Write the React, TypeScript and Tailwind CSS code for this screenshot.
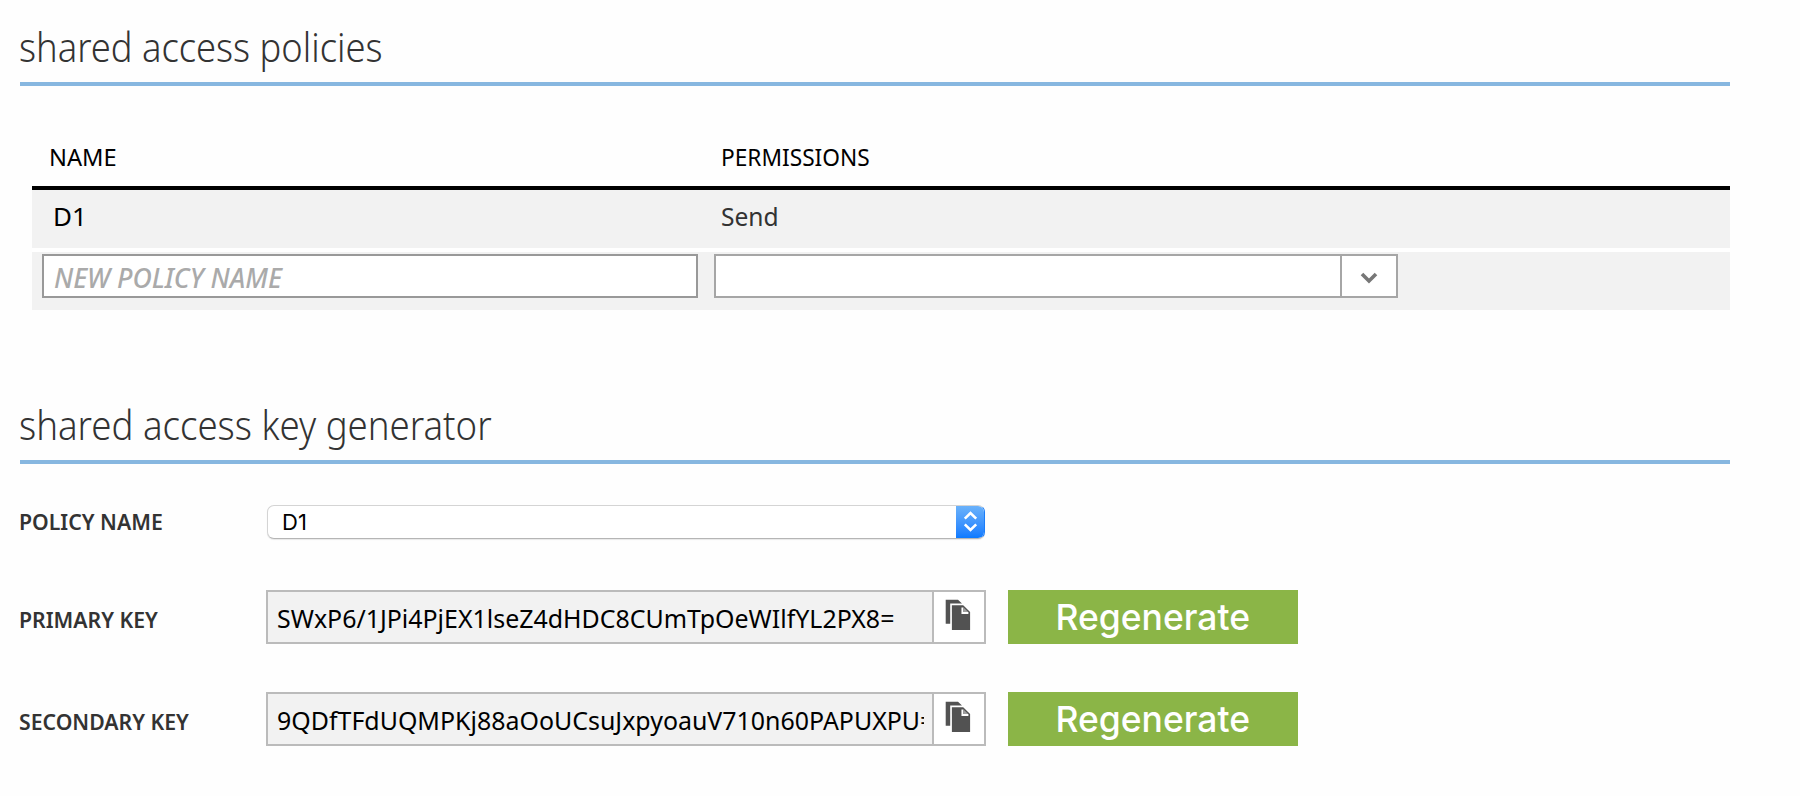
import type { ReactNode } from "react";

function SectionHeading({ children, className = "" }: { children: ReactNode; className?: string }) {
  return (
    <h2 className="ml-5 h-[86px] w-[1710px] border-b-4 border-[#87b7e0] pt-[17px] text-[40px] leading-[60px] font-light whitespace-nowrap text-[#333]">
      <span className={`-ml-px inline-block origin-left ${className}`}>{children}</span>
    </h2>
  );
}

function CopyIcon() {
  return (
    <svg width="26" height="32" viewBox="0 0 26 32" fill="none">
      <path d="M0.7 0.7H13L17 4.6H5.2V24.8H0.7Z" fill="#525252" />
      <path d="M6.9 6.3H18.2L25.1 12.9V31H6.9Z" fill="#525252" />
      <path d="M17.4 8.4V14H23.4" stroke="#fff" strokeWidth="1.9" />
      <path d="M18.3 8.2L23.2 13.1H18.3Z" fill="#a0a0a0" />
    </svg>
  );
}

function Label({ children, className = "" }: { children: ReactNode; className?: string }) {
  return (
    <div
      className={`flex w-[247px] shrink-0 items-center text-[22px] leading-8 font-semibold whitespace-nowrap text-[#333] ${className}`}
    >
      <span className="inline-block origin-left scale-x-[0.965]">{children}</span>
    </div>
  );
}

function KeyRow({ label, value }: { label: string; value: string }) {
  return (
    <div className="flex h-[54px]">
      <Label className="pt-[3px]">{label}</Label>
      <div className="flex w-[720px] border-2 border-[#bbb] bg-white">
        <div className="flex w-[664px] items-center bg-[#f2f2f2] pt-0.5 pr-2 pl-[9px]">
          <div className="w-full overflow-hidden text-[26px] leading-9 whitespace-nowrap text-black">
            <span className="inline-block origin-left scale-x-[0.959]">{value}</span>
          </div>
        </div>
        <button className="flex flex-1 justify-center border-l-2 border-[#bbb] pt-[7px] pr-0.5">
          <CopyIcon />
        </button>
      </div>
      <button className="ml-[22px] w-[290px] bg-[#8bb547] font-['Inter',sans-serif] text-[36px] leading-[54px] font-medium text-white">
        <span className="inline-block scale-x-[0.985]">Regenerate</span>
      </button>
    </div>
  );
}

export default function App() {
  return (
    <main className="h-[796px] w-[1800px] overflow-hidden bg-[#fefefe] font-['Noto_Sans',sans-serif]">
      <SectionHeading className="scale-x-[0.908]">shared access policies</SectionHeading>

      <div className="mt-[42px] ml-8 w-[1698px] bg-white">
        <div className="flex h-[62px] border-b-4 border-black bg-[#fefefe] pl-[17px] text-[24px] leading-[58px] text-black">
          <div className="w-[672px]">
            <span className="inline-block origin-left scale-x-[0.985]">NAME</span>
          </div>
          <div>
            <span className="inline-block origin-left scale-x-[0.945]">PERMISSIONS</span>
          </div>
        </div>
        <div className="flex h-[58px] bg-[#f2f2f2] pl-[21px] leading-[52px]">
          <div className="w-[668px] text-[26px] text-black">D1</div>
          <div className="text-[26px] text-[#333]">
            <span className="inline-block origin-left scale-x-[0.945]">Send</span>
          </div>
        </div>
        <div className="mt-1 flex h-[58px] items-start gap-4 bg-[#f2f2f2] pt-0.5 pl-[10px]">
          <div className="flex h-11 w-[656px] items-center border-2 border-[#999] bg-white pt-[3px] pl-2.5 text-[27px] leading-9 font-medium text-[#aaa] italic">
            <span className="inline-block origin-left scale-x-[0.985] whitespace-nowrap">NEW POLICY NAME</span>
          </div>
          <div className="flex h-11 w-[684px] border-2 border-[#a6a6a6] bg-white">
            <div className="w-[624px]" />
            <button className="flex flex-1 items-center justify-center border-l-2 border-[#a6a6a6] pt-[3px]">
              <svg width="18" height="12" viewBox="0 0 18 12" fill="none">
                <path d="M2 2L9 9L16 2" stroke="#777" strokeWidth="3.6" />
              </svg>
            </button>
          </div>
        </div>
      </div>

      <div className="mt-[68px]">
        <SectionHeading className="scale-x-[0.915]">shared access key generator</SectionHeading>
      </div>

      <div className="mt-[41px] pl-[19px]">
        <div className="mb-[51px] flex h-[34px]">
          <Label className="pb-0.5">POLICY NAME</Label>
          <div className="ml-px flex w-[718px] overflow-hidden rounded-[7px] border border-[#d4d4d4] border-r-[#1a7dfa] border-b-[#b5b5b5] bg-white shadow-[0_1px_1px_#e8e8e8]">
            <div className="flex flex-1 items-center pl-[14px] font-['Inter',sans-serif] text-[22px] leading-8 text-black">
              D1
            </div>
            <div className="-my-px -mr-px flex w-[29px] flex-col items-center justify-center gap-[3px] border-b border-[#0a62f5] bg-linear-to-b from-[#6cb3fa] to-[#0a7aff]">
              <svg width="15" height="9" viewBox="0 0 15 9" fill="none">
                <path d="M1.8 7.6L7.5 2L13.2 7.6" stroke="#fff" strokeWidth="2.6" />
              </svg>
              <svg width="15" height="9" viewBox="0 0 15 9" fill="none">
                <path d="M1.8 1.4L7.5 7L13.2 1.4" stroke="#fff" strokeWidth="2.6" />
              </svg>
            </div>
          </div>
        </div>
        <div className="flex flex-col gap-12">
          <KeyRow label="PRIMARY KEY" value="SWxP6/1JPi4PjEX1lseZ4dHDC8CUmTpOeWIlfYL2PX8=" />
          <KeyRow label="SECONDARY KEY" value="9QDfTFdUQMPKj88aOoUCsuJxpyoauV710n60PAPUXPU=" />
        </div>
      </div>
    </main>
  );
}
